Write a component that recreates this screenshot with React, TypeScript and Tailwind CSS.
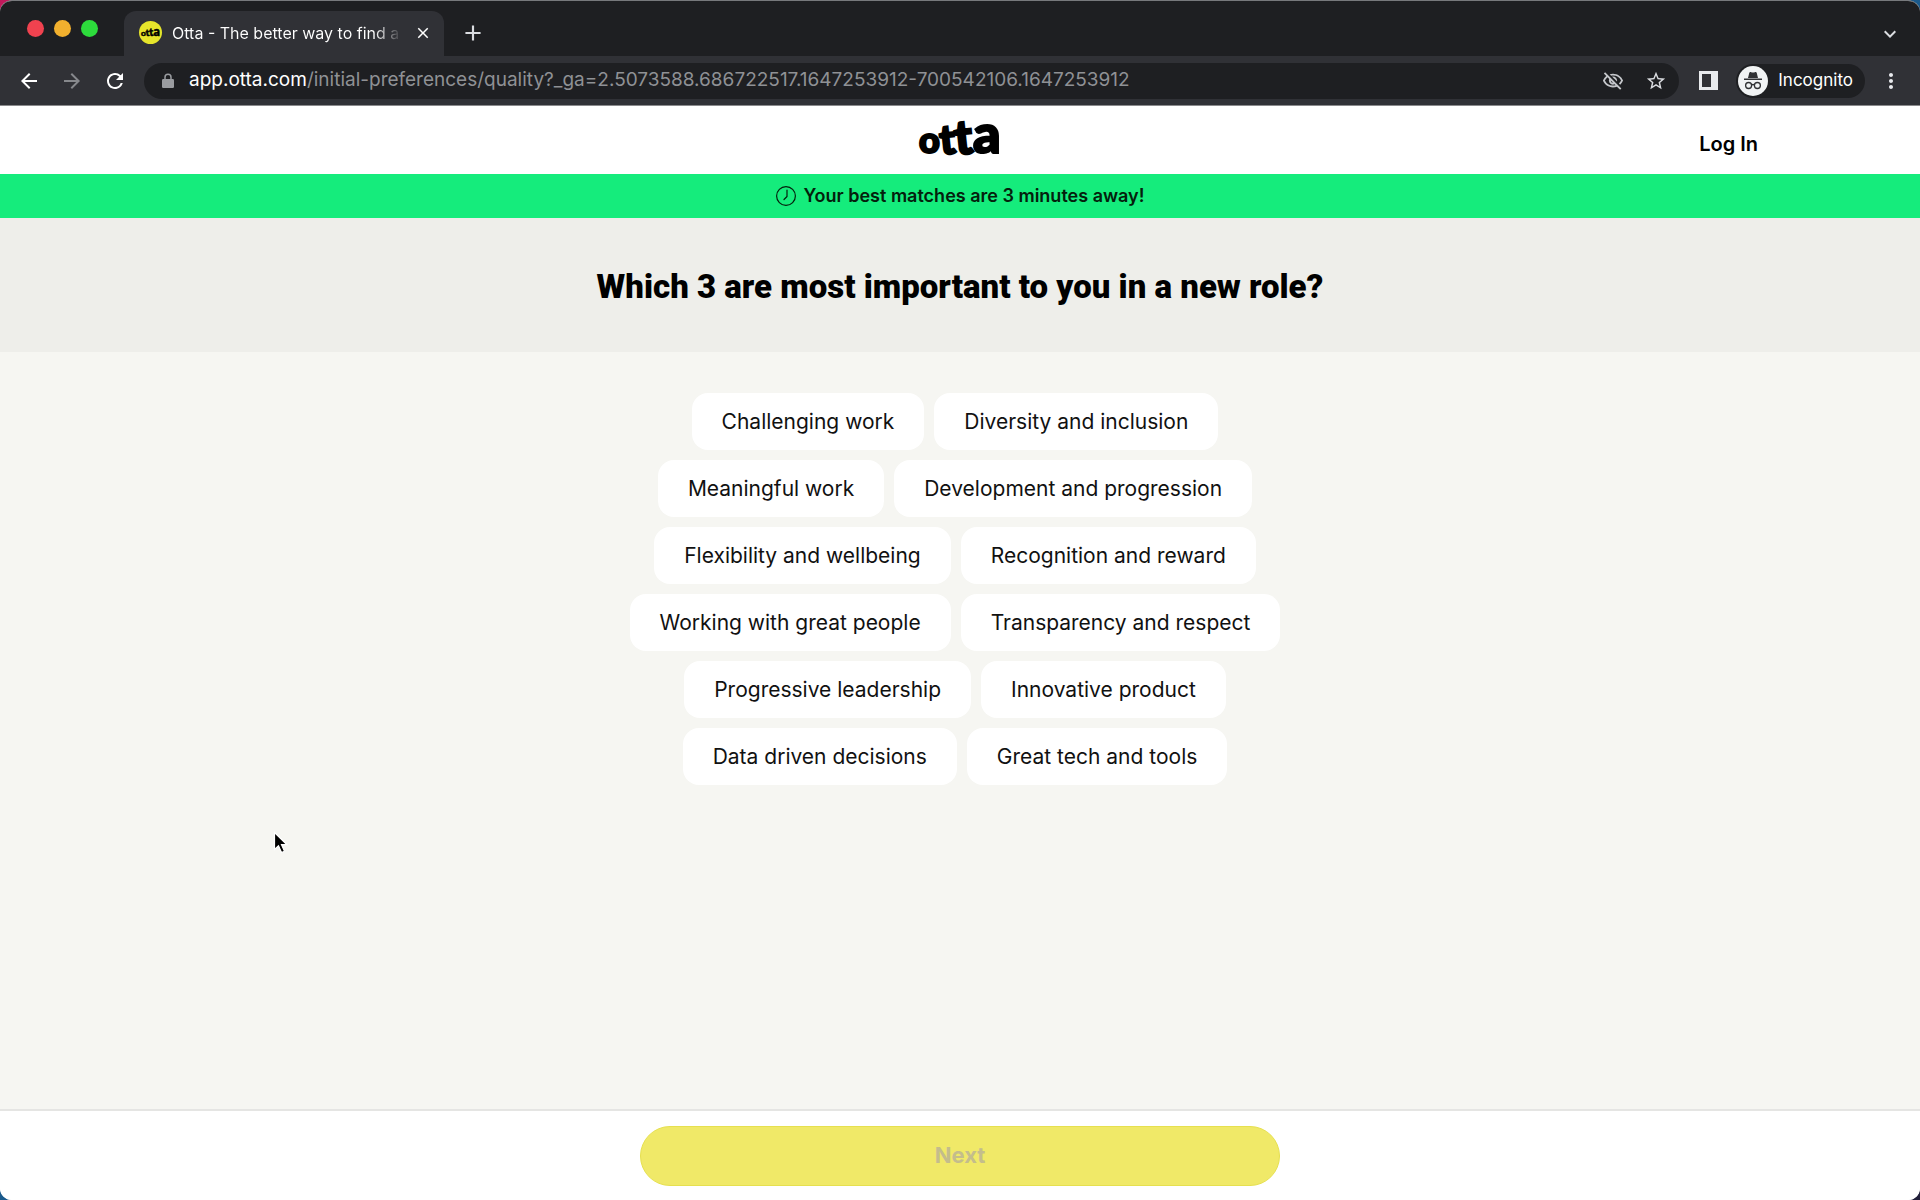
import React from "react";
import {
  MdArrowBack,
  MdArrowForward,
  MdRefresh,
  MdAdd,
  MdClose,
  MdStarBorder,
  MdMoreVert,
  MdKeyboardArrowDown,
  MdOutlineVisibilityOff,
} from "react-icons/md";

const preferences = [
  "Challenging work",
  "Diversity and inclusion",
  "Meaningful work",
  "Development and progression",
  "Flexibility and wellbeing",
  "Recognition and reward",
  "Working with great people",
  "Transparency and respect",
  "Progressive leadership",
  "Innovative product",
  "Data driven decisions",
  "Great tech and tools",
];

const OttaLogo = ({ className }: { className?: string }) => (
  <svg viewBox="0 0 82 32" className={className} overflow="visible" role="img" aria-label="Otta">
    <g fontFamily="Lato, sans-serif" fontWeight="900" fill="currentColor" stroke="currentColor" strokeWidth="2.2">
      <text x="0" y="29" fontSize="36">o</text>
      <text x="22" y="30" fontSize="41" transform="rotate(-6 30 30)">t</text>
      <text x="37" y="30" fontSize="48" transform="rotate(-6 46 30)">t</text>
      <text x="54" y="29" fontSize="54">a</text>
    </g>
  </svg>
);

const IncognitoIcon = () => (
  <svg viewBox="0 0 30 30" className="size-[30px]" aria-hidden="true">
    <circle cx="15" cy="15" r="15" fill="#f1f3f4" />
    <path d="M10 12l1.3-5.2c.2-.7.8-1 1.4-.8l1.2.4c.7.2 1.5.2 2.2 0l1.2-.4c.6-.2 1.2.1 1.4.8L20 12z" fill="#303134" />
    <path d="M6 13.2h18" stroke="#303134" strokeWidth="1.4" />
    <g fill="none" stroke="#303134" strokeWidth="1.3">
      <circle cx="10.6" cy="19.5" r="3" />
      <circle cx="19.4" cy="19.5" r="3" />
      <path d="M13.6 19c.9-.6 1.9-.6 2.8 0" />
    </g>
  </svg>
);

const LockIcon = () => (
  <svg viewBox="0 0 12 16" className="h-4 w-3" aria-hidden="true">
    <rect y="6" width="12" height="9" rx="1.2" fill="#9a9ca0" />
    <path d="M3 7V4.2a3 3 0 0 1 6 0V7" fill="none" stroke="#9a9ca0" strokeWidth="1.5" />
  </svg>
);

const SidePanelIcon = () => (
  <svg viewBox="0 0 19 19" className="size-[19px]" aria-hidden="true">
    <path d="M0 0h19v19H0zM3 3v13h9V3z" fill="#e8eaed" fillRule="evenodd" />
  </svg>
);

const ClockIcon = () => (
  <svg viewBox="0 0 20 20" className="size-5" fill="none" stroke="currentColor" strokeWidth="1.2" aria-hidden="true">
    <circle cx="10" cy="10" r="9.4" />
    <path d="M11 4v6.5l-3 3" strokeLinecap="round" strokeLinejoin="round" />
  </svg>
);

const TabStrip = () => (
  <div className="flex h-[55px] items-end bg-[#1e1f22] pr-[18px]">
    <div className="flex h-[55px] w-[124px] items-center gap-[10px] pl-[27px]">
      <button aria-label="Close window" className="size-[17px] rounded-full bg-[#f0424f]" />
      <button aria-label="Minimise window" className="size-[17px] rounded-full bg-[#f2b02e]" />
      <button aria-label="Zoom window" className="size-[17px] rounded-full bg-[#2ddc3c]" />
    </div>
    <div className="flex h-[45px] w-80 items-center rounded-t-xl bg-[#303136] pr-3 pb-[2px] pl-[15px] text-white">
      <span className="flex size-[23px] shrink-0 items-center justify-center rounded-full bg-[#e6e52b] text-black">
        <OttaLogo className="w-[19px]" />
      </span>
      <span className="ml-[10px] w-[230px] overflow-hidden bg-linear-to-r from-white from-88% to-transparent bg-clip-text text-base whitespace-nowrap text-transparent">
        Otta - The better way to find a
      </span>
      <button aria-label="Close tab" className="ml-auto">
        <MdClose className="size-[18px]" />
      </button>
    </div>
    <button aria-label="New tab" className="mb-[10px] ml-4 text-[#dadce0]">
      <MdAdd className="size-[26px]" />
    </button>
    <button aria-label="Search tabs" className="mb-[10px] ml-auto text-[#dadce0]">
      <MdKeyboardArrowDown className="size-6" />
    </button>
  </div>
);

const Toolbar = () => (
  <div className="flex h-[49px] items-center bg-[#303136] px-[17px] text-[#e8eaed]">
    <div className="flex items-center gap-[19px]">
      <button aria-label="Back">
        <MdArrowBack className="size-6 text-white" />
      </button>
      <button aria-label="Forward">
        <MdArrowForward className="size-6 text-[#86888c]" />
      </button>
      <button aria-label="Reload">
        <MdRefresh className="size-6 text-white" />
      </button>
    </div>
    <div className="ml-[17px] flex h-9 flex-1 items-center rounded-full bg-[#1e1f22] pr-3 pl-[18px]">
      <LockIcon />
      <a href="#" className="ml-[15px] text-[19px] text-[#8f9195]">
        <span className="text-white">app.otta.com</span>
        /initial-preferences/quality?_ga=2.5073588.686722517.1647253912-700542106.1647253912
      </a>
      <button aria-label="Third-party cookies blocked" className="ml-auto text-[#c4c6ca]">
        <MdOutlineVisibilityOff className="size-[22px]" />
      </button>
      <button aria-label="Bookmark this tab" className="ml-[21px] text-[#dadce0]">
        <MdStarBorder className="size-[22px]" />
      </button>
    </div>
    <button aria-label="Side panel" className="ml-5">
      <SidePanelIcon />
    </button>
    <button className="ml-[18px] flex h-[34px] items-center gap-[10px] rounded-full bg-[#1e1f22] pr-3 pl-[2px] text-[17px] text-white">
      <IncognitoIcon />
      Incognito
    </button>
    <button aria-label="Menu" className="ml-[14px]">
      <MdMoreVert className="size-6" />
    </button>
  </div>
);

export default function App() {
  return (
    <div className="min-h-screen bg-linear-to-br from-[#c2185b] via-[#1a5a8c] to-[#22203a] font-[Inter,sans-serif]">
      <div className="flex min-h-screen flex-col overflow-hidden rounded-xl border-t border-[#77797c] bg-white">
        <div className="border-b border-[#8a8a8c]">
          <TabStrip />
          <Toolbar />
        </div>

        <header className="grid h-[68px] grid-cols-3 items-center bg-white px-[162px]">
          <a href="#" className="col-start-2 justify-self-center text-black">
            <OttaLogo className="w-[82px]" />
          </a>
          <a href="#" className="mt-2 justify-self-end text-xl font-semibold text-black">
            Log In
          </a>
        </header>

        <div className="flex h-11 items-center justify-center gap-2 bg-[#15ec7c] text-[#04200c]">
          <ClockIcon />
          <p className="text-lg font-semibold">Your best matches are 3 minutes away!</p>
        </div>

        <div className="flex h-[134px] items-center justify-center bg-[#eeeeea] pt-1">
          <h1 className="font-[Roboto,sans-serif] text-[33px] font-black text-black">
            Which 3 are most important to you in a new role?
          </h1>
        </div>

        <main className="flex flex-1 flex-col items-center bg-[#f6f6f2] pt-[41px]">
          <div className="flex max-w-[680px] flex-wrap justify-center">
            {preferences.map((preference) => (
              <button
                key={preference}
                className="mr-[10px] mb-[10px] h-[57px] rounded-2xl bg-white px-[30px] text-[21px] text-[#111111]"
              >
                {preference}
              </button>
            ))}
          </div>
        </main>

        <footer className="flex h-[91px] items-center justify-center border-t-2 border-[#e5e5e3] bg-white">
          <button disabled className="h-[60px] w-full max-w-[640px] rounded-full border border-[#e6e04f] bg-[#f0e968] text-[22px] font-bold text-[#c4bd8c]">
            Next
          </button>
        </footer>
      </div>

      {/* Mouse pointer */}
      <svg viewBox="0 0 16 24" className="absolute top-[831px] left-[273px] h-6 w-4" aria-hidden="true">
        <path d="M1.5 1.5v17l4-3.7 3 6.7 3-1.3-3-6.5h5.5z" fill="#000" stroke="#fff" strokeWidth="1.2" />
      </svg>
    </div>
  );
}
